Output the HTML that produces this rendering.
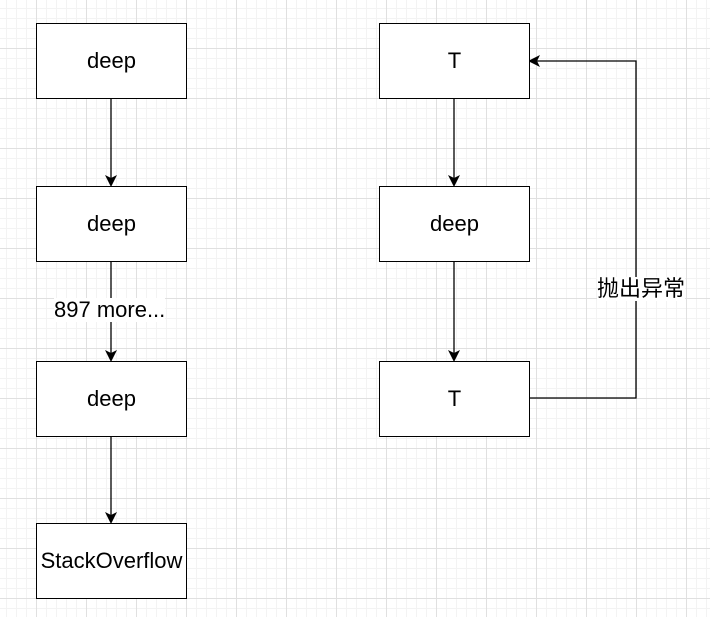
<!DOCTYPE html>
<html><head><meta charset="utf-8"><style>
html,body{margin:0;padding:0}
body{width:710px;height:617px;position:relative;overflow:hidden;background-color:#fff;
background-image:
linear-gradient(to right,#e0e0e0 1px,transparent 1px),
linear-gradient(to bottom,#e0e0e0 1px,transparent 1px),
linear-gradient(to right,#f3f3f3 1px,transparent 1px),
linear-gradient(to bottom,#f3f3f3 1px,transparent 1px);
background-size:50px 50px,50px 50px,10px 10px,10px 10px;
background-position:36px -2px,36px -2px,6px 8px,6px 8px;
font-family:"Liberation Sans","Noto Sans CJK SC",sans-serif;}
.b{position:absolute;width:149px;height:74px;border:1px solid #000;background:#fff;display:flex;align-items:center;justify-content:center;font-size:22px;color:#000}
.l{position:absolute;background:#fff;font-size:22px;color:#000;line-height:24px}
svg{position:absolute;left:0;top:0}
</style></head><body>
<svg width="710" height="617">
<defs><marker id="a" markerWidth="12" markerHeight="12" refX="10" refY="6" orient="auto" markerUnits="userSpaceOnUse"><path d="M0,0 L12,6 L0,12 L3,6 Z" fill="#000"/></marker></defs>
<g stroke="#000" stroke-width="1.3" fill="none">
<line x1="111" y1="98" x2="111" y2="185" marker-end="url(#a)"/>
<line x1="111" y1="261" x2="111" y2="360" marker-end="url(#a)"/>
<line x1="111" y1="436" x2="111" y2="522" marker-end="url(#a)"/>
<line x1="454" y1="98" x2="454" y2="185" marker-end="url(#a)"/>
<line x1="454" y1="261" x2="454" y2="360" marker-end="url(#a)"/>
<polyline points="529,398 636,398 636,61 530,61" marker-end="url(#a)"/>
</g></svg>
<div class="b" style="left:36px;top:23px">deep</div>
<div class="b" style="left:36px;top:186px">deep</div>
<div class="b" style="left:36px;top:361px">deep</div>
<div class="b" style="left:36px;top:523px">StackOverflow</div>
<div class="b" style="left:379px;top:23px">T</div>
<div class="b" style="left:379px;top:186px">deep</div>
<div class="b" style="left:379px;top:361px">T</div>
<div class="l" style="left:54px;top:298px">897 more...</div>
<div class="l" style="left:597px;top:277px">抛出异常</div>
</body></html>
